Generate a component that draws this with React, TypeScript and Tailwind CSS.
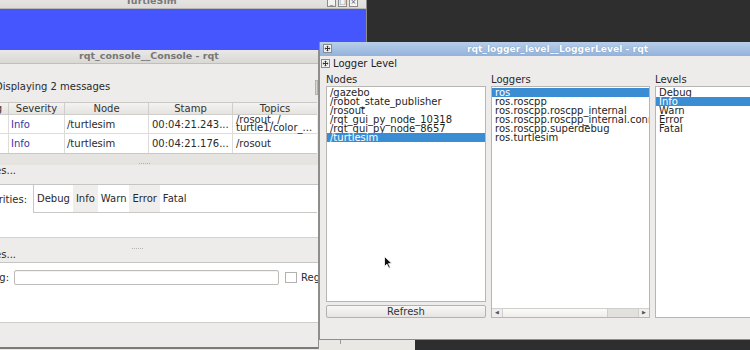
import React from 'react';

const nodes = ['/gazebo', '/robot_state_publisher', '/rosout', '/rqt_gui_py_node_10318', '/rqt_gui_py_node_8657', '/turtlesim'];
const loggers = ['ros', 'ros.roscpp', 'ros.roscpp.roscpp_internal', 'ros.roscpp.roscpp_internal.connections', 'ros.roscpp.superdebug', 'ros.turtlesim'];
const levels = ['Debug', 'Info', 'Warn', 'Error', 'Fatal'];
const severities = ['Debug', 'Info', 'Warn', 'Error', 'Fatal'];

const DockIcon = () => (
  <svg width="9" height="9" viewBox="0 0 9 9">
    <rect x="0.5" y="0.5" width="8" height="8" fill="#f2f2f2" stroke="#8a8a8a" />
    <path d="M4.5 2v5M2 4.5h5" stroke="#333" strokeWidth="1" />
    <path d="M4.5 1.5L3.2 3h2.6zM4.5 7.5L3.2 6h2.6zM1.5 4.5L3 3.2v2.6zM7.5 4.5L6 3.2v2.6z" fill="#333" />
  </svg>
);

const List = ({ items, selected }: { items: string[]; selected: string }) => (
  <div className="flex flex-col pt-[1px]">
    {items.map((it) => (
      <div
        key={it}
        className={`h-[9px] leading-[9px] pl-[3px] whitespace-nowrap ${it === selected ? 'bg-[#3a8dd2] text-white' : 'text-[#1e1e1e]'}`}
      >
        {it}
      </div>
    ))}
  </div>
);

const Splitter = () => (
  <div className="flex gap-[1px]">
    {[0, 1, 2, 3, 4, 5].map((i) => (
      <div key={i} className="w-[1px] h-[1px] bg-[#b5b3af]" />
    ))}
  </div>
);

export default function App() {
  return (
    <div className="relative w-[750px] h-[350px] overflow-hidden bg-[#2e2e2e] font-['DejaVu_Sans',sans-serif] text-[10px] text-[#2a2a2a]">
      {/* window strip behind at the bottom */}
      <div className="absolute left-0 top-[338px] w-[415px] h-[12px] bg-[#e9e8e5] border-t border-[#9c9b98]">
        <div className="ml-[340px] w-[1px] h-[5px] bg-[#9c9b98]" />
      </div>

      {/* TurtleSim */}
      <div className="absolute left-[-64px] top-[-11px] w-[431px] h-[80px] flex flex-col border-r border-[#8d8d8d]">
        <div className="h-[20px] relative flex items-end justify-center pb-[2px] bg-gradient-to-b from-[#efeeec] to-[#dddcd9] border-b border-[#b9b8b5]">
          <span className="font-bold text-[9.5px] leading-[11px] text-[#7a7a7a]">TurtleSim</span>
          <div className="absolute right-[8px] top-[8px] flex gap-[2px]">
            {['_', '□', '×'].map((c) => (
              <div key={c} className="w-[9px] h-[10px] border border-[#8b8b8b] bg-[#f3f3f2] flex items-center justify-center text-[7px] leading-none text-[#555]">
                {c}
              </div>
            ))}
          </div>
        </div>
        <div className="flex-1 bg-[#4556ff]" />
      </div>

      {/* rqt_console */}
      <div className="absolute left-[-20px] top-[50px] w-[339px] h-[299px] flex flex-col bg-[#edecea] border-r border-[#8f8e8b]">
        <div className="h-[14px] flex items-center justify-center bg-gradient-to-b from-[#e9e8e6] to-[#d9d8d5] border-b border-[#c0bfbc]">
          <span className="font-bold text-[9.5px] text-[#777]">rqt_console__Console - rqt</span>
        </div>
        <div className="h-[38px] flex items-center pl-[15px] pt-[7px] relative">
          <span>Displaying 2 messages</span>
          <div className="absolute right-0 top-[16px] w-[3px] h-[15px] bg-[#d6d5d2] border border-[#b4b3b0]" />
        </div>
        {/* table */}
        <div className="flex flex-col bg-white border-y border-[#c9c8c5] w-[337px]">
          <div className="h-[12px] flex bg-gradient-to-b from-[#f4f3f1] to-[#e4e3e0] border-b border-[#cfcecb] text-[#333]">
            <div className="w-[29px] flex justify-end pr-[6px] border-r border-[#cfcecb] whitespace-nowrap leading-[11px]">Msg</div>
            <div className="w-[56px] text-center border-r border-[#cfcecb] leading-[11px]">Severity</div>
            <div className="w-[84px] text-center border-r border-[#cfcecb] leading-[11px]">Node</div>
            <div className="w-[84px] text-center border-r border-[#cfcecb] leading-[11px]">Stamp</div>
            <div className="w-[84px] text-center leading-[11px]">Topics</div>
          </div>
          {[
            { stamp: '00:04:21.243...', topics: ['/rosout, /', 'turtle1/color_...'] },
            { stamp: '00:04:21.176...', topics: ['/rosout'] },
          ].map((r) => (
            <div key={r.stamp} className="h-[19px] flex border-b border-[#dddcda] last:border-b-0">
              <div className="w-[29px] border-r border-[#dddcda]" />
              <div className="w-[56px] pl-[2px] flex items-center border-r border-[#dddcda] text-[#3535a8]">Info</div>
              <div className="w-[84px] pl-[2px] flex items-center border-r border-[#dddcda]">/turtlesim</div>
              <div className="w-[84px] pl-[3px] flex items-center border-r border-[#dddcda] whitespace-nowrap">{r.stamp}</div>
              <div className="w-[84px] pl-[3px] flex flex-col justify-center leading-[8px] whitespace-nowrap">
                {r.topics.map((t) => (
                  <span key={t}>{t}</span>
                ))}
              </div>
            </div>
          ))}
        </div>
        <div className="h-[11px] bg-[#e5e4e1] flex items-end justify-center pb-[1px] pr-[10px]">
          <Splitter />
        </div>
        <div className="h-[20px] flex items-start border-b border-[#c6c5c2]">
          <div className="w-[36px] flex justify-end whitespace-nowrap leading-[12px]">Exclude Messages...</div>
        </div>
        <div className="h-[52px] bg-white flex items-start">
          <div className="w-[48px] h-[28px] shrink-0 flex items-center justify-end whitespace-nowrap pr-[1px]">Severities:</div>
          <div className="ml-[5px] w-[284px] h-[28px] shrink-0 flex border-l border-b border-[#c9c8c5]">
            {severities.map((s, i) => (
              <div key={s} className={`flex items-center px-[3px] ${i % 2 === 1 ? 'bg-[#efeeed]' : ''}`}>
                {s}
              </div>
            ))}
          </div>
        </div>
        <div className="h-[12px] border-t border-[#d3d2cf] flex items-end justify-center pr-[24px]">
          <Splitter />
        </div>
        <div className="h-[14px] flex items-center border-b border-[#c6c5c2]">
          <div className="w-[36px] flex justify-end whitespace-nowrap leading-[12px] pb-[1px]">Highlight Messages...</div>
        </div>
        <div className="h-[59px] bg-white flex items-start pt-[7px] overflow-hidden">
          <div className="w-[29px] h-[15px] shrink-0 flex items-center justify-end whitespace-nowrap">Containing:</div>
          <div className="ml-[5px] w-[265px] h-[15px] shrink-0 bg-white border border-[#bdbcb9] rounded-[2px] shadow-[inset_0_1px_1px_rgba(0,0,0,0.06)]" />
          <div className="ml-[6px] mt-[2px] w-[12px] h-[11px] shrink-0 border border-[#b3b2af] bg-white" />
          <span className="ml-[4px] shrink-0 leading-[15px] whitespace-nowrap">Regex</span>
        </div>
        <div className="flex-1 border-t border-[#cfcecb]" />
        <div className="h-[2px] bg-[#7d7c79]" />
      </div>

      {/* rqt_logger_level */}
      <div className="absolute left-[319px] top-[42px] w-[476px] h-[298px] flex flex-col bg-[#edecea] border-l border-b border-[#8e8d8a]">
        <div className="h-[14px] relative flex items-center justify-center bg-gradient-to-b from-[#b9cfea] to-[#93b2db]">
          <div className="absolute left-[3px] top-[2px]">
            <DockIcon />
          </div>
          <span className="font-bold text-[9.2px] text-white [text-shadow:0_0_1px_rgba(60,90,140,0.6)]">rqt_logger_level__LoggerLevel - rqt</span>
        </div>
        <div className="h-[14px] flex items-center pl-[1px] gap-[3px]">
          <DockIcon />
          <span className="text-[#1e1e1e]">Logger Level</span>
        </div>
        <div className="flex-1 grid grid-cols-[160px_159px_1fr] gap-x-[5px] pl-[6px] pb-[21px]">
          <div className="flex flex-col">
            <div className="h-[16px] flex items-center pt-[2px]">Nodes</div>
            <div className="h-[216px] bg-white border border-[#b7b6b3]">
              <List items={nodes} selected="/turtlesim" />
            </div>
            <button className="mt-[3px] h-[13px] bg-gradient-to-b from-[#f7f7f6] to-[#e6e5e2] border border-[#b3b2af] rounded-[2px] text-[#333] font-['DejaVu_Sans',sans-serif] text-[10px] leading-[11px]">
              Refresh
            </button>
          </div>
          <div className="flex flex-col">
            <div className="h-[16px] flex items-center pt-[2px]">Loggers</div>
            <div className="h-[232px] bg-white border border-[#b7b6b3] flex flex-col overflow-hidden">
              <div className="flex-1 overflow-hidden">
                <List items={loggers} selected="ros" />
              </div>
              <div className="h-[9px] flex border-t border-[#d0cfcc] bg-[#efeeec]">
                <div className="w-[11px] flex items-center justify-center text-[5px] text-[#555] border-r border-[#d0cfcc]">◀</div>
                <div className="w-[105px] bg-gradient-to-b from-[#fbfbfa] to-[#eeedeb] border-r border-[#cfcecb]" />
                <div className="w-[30px] bg-[#e2e1de]" />
                <div className="flex-1 flex items-center justify-center text-[5px] text-[#555] border-l border-[#d0cfcc]">▶</div>
              </div>
            </div>
          </div>
          <div className="flex flex-col">
            <div className="h-[16px] flex items-center pt-[2px]">Levels</div>
            <div className="h-[232px] bg-white border border-[#b7b6b3]">
              <List items={levels} selected="Info" />
            </div>
          </div>
        </div>
      </div>

      {/* mouse pointer */}
      <svg className="absolute left-[384px] top-[256px]" width="9" height="13" viewBox="0 0 9 13">
        <path d="M0.5 0.5v10l2.5-2.3 1.8 4 1.5-0.7-1.8-3.9h3.4z" fill="#111" stroke="#fff" strokeWidth="0.8" />
      </svg>
    </div>
  );
}
